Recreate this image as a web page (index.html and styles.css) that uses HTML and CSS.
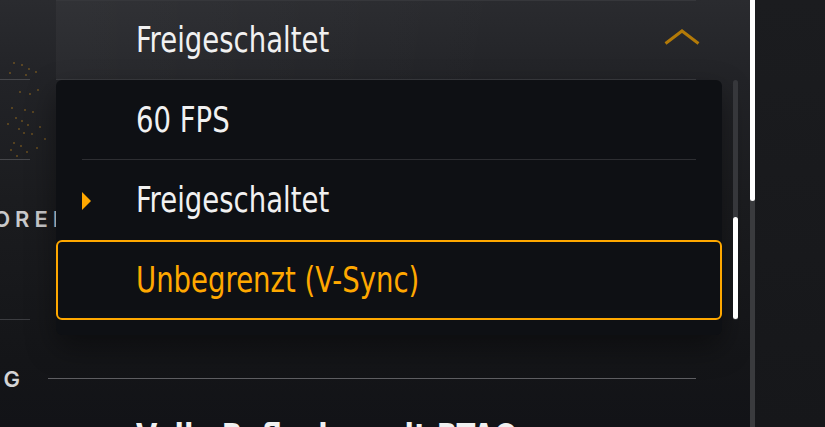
FILE: index.html
```html
<!DOCTYPE html>
<html lang="de">
<head>
<meta charset="utf-8">
<title>Grafik-Einstellungen</title>
<link rel="stylesheet" href="styles.css">
</head>
<body>
<div class="screen">
  <div class="main">
    <div class="sidebar">
      <svg class="side-deco" width="48" height="160" viewBox="0 0 48 160">
        <g fill="#b8801e">
          <circle cx="14" cy="63" r="0.7"/><circle cx="22" cy="65" r="0.7"/><circle cx="29" cy="69" r="0.7"/>
          <circle cx="10" cy="73" r="0.7"/><circle cx="26" cy="75" r="0.7"/><circle cx="36" cy="72" r="0.7"/>
          <circle cx="38" cy="90" r="0.7"/><circle cx="20" cy="92" r="0.7"/><circle cx="30" cy="94" r="0.7"/>
          <circle cx="12" cy="108" r="0.7"/><circle cx="25" cy="110" r="0.7"/><circle cx="33" cy="112" r="0.7"/>
          <circle cx="16" cy="118" r="0.7"/><circle cx="22" cy="121" r="0.7"/><circle cx="8" cy="124" r="0.7"/>
          <circle cx="28" cy="125" r="0.7"/><circle cx="40" cy="127" r="0.7"/><circle cx="19" cy="129" r="0.7"/>
          <circle cx="24" cy="133" r="0.7"/><circle cx="32" cy="134" r="0.7"/><circle cx="45" cy="139" r="0.7"/>
          <circle cx="14" cy="143" r="0.7"/><circle cx="21" cy="146" r="0.7"/><circle cx="37" cy="148" r="0.7"/>
          <circle cx="11" cy="150" r="0.7"/><circle cx="27" cy="152" r="0.7"/><circle cx="17" cy="156" r="0.7"/>
        </g>
        <g fill="#46474b">
          <rect x="0" y="79" width="30" height="1"/>
          <rect x="0" y="159" width="30" height="1"/>
        </g>
      </svg>
      <div class="side-block">
        <div class="side-label">VOREINSTELLUNGEN</div>
      </div>
      <div class="side-line"></div>
      <div class="sec-label"><span>RAYTRACING</span></div>
    </div>
    <div class="content">
      <div class="setting-head">
        <span class="value">Freigeschaltet</span>
        <svg class="chevron" width="36" height="16" viewBox="0 0 36 16">
          <polyline points="1.5,14.5 18,2 34.5,14.5" fill="none" stroke="#b37a08" stroke-width="3"/>
        </svg>
      </div>
      <div class="spacer"></div>
      <div class="section-rule"></div>
      <div class="setting-row"><span class="value strong">Volle Reflexion mit RTAO</span></div>
    </div>

    <div class="dropdown">
      <div class="opt"><span class="mark"></span><span class="value">60 FPS</span></div>
      <div class="opt-divider"></div>
      <div class="opt"><span class="mark"><span class="tri"></span></span><span class="value">Freigeschaltet</span></div>
      <div class="opt selected"><span class="mark"></span><span class="value">Unbegrenzt (V-Sync)</span></div>
    </div>
    <div class="dd-scroll"><div class="dd-thumb"></div></div>
  </div>
  <div class="outer-scroll"><div class="outer-thumb"></div></div>
  <div class="right"></div>
</div>
</body>
</html>
```

FILE: styles.css
```css
* { box-sizing: border-box; }
html, body {
  margin: 0;
  padding: 0;
  width: 825px;
  height: 427px;
  overflow: hidden;
  background: #141519;
}
.screen {
  display: flex;
  width: 825px;
  height: 427px;
  background: linear-gradient(180deg, #2a2b2f 0px, #222327 80px, #1b1c1f 200px, #141518 360px, #121317 427px);
}
.main {
  position: relative;
  width: 750px;
  height: 427px;
  flex: none;
  display: flex;
  overflow: hidden;
}
.sidebar {
  width: 48px;
  flex: none;
  display: flex;
  flex-direction: column;
}
.sidebar > * { flex: none; }
.side-deco { display: block; }
.side-block {
  height: 159px;
  padding-top: 47px;
}
.side-label {
  margin-left: -27px;
  white-space: nowrap;
  font-family: Inter, "Liberation Sans", sans-serif;
  font-weight: 600;
  font-size: 22px;
  line-height: 24px;
  letter-spacing: 5px;
  color: #c9c9cb;
}
.side-line {
  width: 30px;
  height: 1px;
  background: #3c3d41;
}
.sec-label {
  width: 25px;
  margin-top: 47px;
  display: flex;
  justify-content: flex-end;
  white-space: nowrap;
  font-family: Inter, "Liberation Sans", sans-serif;
  font-weight: 600;
  font-size: 22px;
  line-height: 24px;
  letter-spacing: 5px;
  color: #d4d4d6;
}
.content {
  flex: 1;
  display: flex;
  flex-direction: column;
}
.content > * { flex: none; }
.value {
  display: inline-block;
  font-family: "DejaVu Sans Condensed", "DejaVu Sans", sans-serif;
  font-stretch: condensed;
  font-size: 36px;
  line-height: 36px;
  color: #f1f1f1;
  white-space: nowrap;
  transform: scaleX(0.85);
  transform-origin: left center;
}
.value.strong { font-weight: bold; }
.setting-head {
  height: 80px;
  margin-left: 8px;
  margin-right: 54px;
  padding-left: 80px;
  display: flex;
  align-items: center;
  justify-content: space-between;
  border-top: 1px solid #36373b;
  border-bottom: 1px solid #3a3b3f;
  background: linear-gradient(100deg, rgba(255,255,255,0.035), rgba(255,255,255,0.0) 70%);
}
.chevron {
  margin-right: -4px;
  margin-top: -6px;
}
.spacer { height: 298px; }
.section-rule {
  height: 1px;
  margin-right: 54px;
  background: #5e5e62;
}
.setting-row {
  padding-left: 88px;
  margin-top: 40px;
  height: 40px;
}
.dropdown {
  position: absolute;
  left: 56px;
  top: 80px;
  width: 666px;
  height: 255px;
  background: #0e1014;
  border-radius: 6px;
  box-shadow: 0 12px 30px rgba(0,0,0,0.4);
  display: flex;
  flex-direction: column;
}
.dropdown > * { flex: none; }
.opt {
  height: 79px;
  display: flex;
  align-items: center;
  padding-left: 26px;
}
.opt-divider + .opt { height: 80px; }
.mark {
  width: 54px;
  flex: none;
  display: flex;
  align-items: center;
}
.tri {
  width: 0;
  height: 0;
  border-top: 9px solid transparent;
  border-bottom: 9px solid transparent;
  border-left: 9px solid #ffa800;
  margin-top: 2px;
}
.opt-divider {
  height: 1px;
  margin: 0 26px;
  background: #2d2e32;
}
.opt.selected {
  height: 80px;
  border: 2px solid #ffa800;
  border-radius: 6px;
  padding-left: 24px;
}
.opt.selected .value { color: #ffa800; }
.dd-scroll {
  position: absolute;
  left: 733px;
  top: 80px;
  width: 5px;
  height: 240px;
  border-radius: 3px;
  background: #36373b;
}
.dd-thumb {
  margin-top: 137px;
  height: 102px;
  border-radius: 3px;
  background: #ffffff;
}
.outer-scroll {
  width: 5px;
  flex: none;
  background: #3a3b3e;
}
.outer-thumb {
  height: 201px;
  background: #ffffff;
  border-radius: 0 0 3px 3px;
}
.right {
  flex: 1;
  background: linear-gradient(180deg, #1b1c1f, #16171a);
}
```
